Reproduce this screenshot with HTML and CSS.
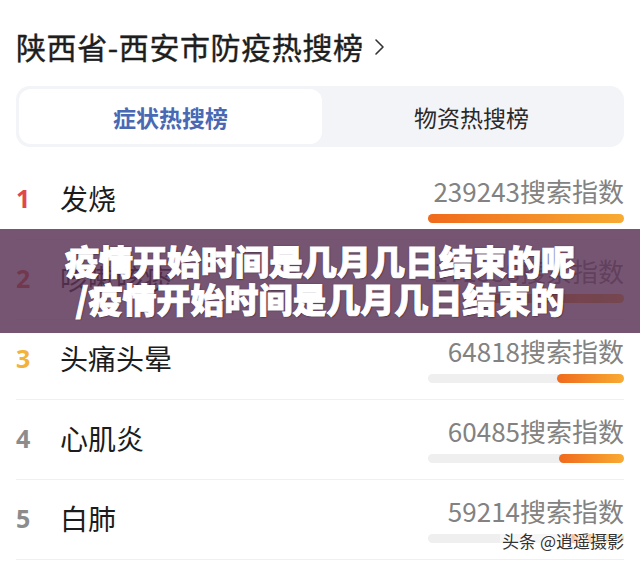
FILE: index.html
```html
<!DOCTYPE html>
<html lang="zh-CN">
<head>
<meta charset="utf-8">
<title>陕西省-西安市防疫热搜榜</title>
<link rel="stylesheet" href="styles.css">
</head>
<body>
<div class="page">
  <h1 class="title">陕西省-西安市防疫热搜榜<svg class="chev" width="12" height="20" viewBox="0 0 12 20"><polyline points="2,3 9,10 2,17" fill="none" stroke="#333" stroke-width="1.6" stroke-linecap="round" stroke-linejoin="round"/></svg></h1>

  <div class="tabs">
    <div class="tab active">症状热搜榜</div>
    <div class="tab">物资热搜榜</div>
  </div>

  <ul class="list">
    <li class="row">
      <div class="left"><span class="rank r1">1</span><span class="label">发烧</span></div>
      <div class="right"><div class="index">239243搜索指数</div><div class="track"><div class="fill" style="width:100%"></div></div></div>
    </li>
    <li class="row">
      <div class="left"><span class="rank r2">2</span><span class="label">咳嗽咳痰</span></div>
      <div class="right"><div class="index">171538搜索指数</div><div class="track"><div class="fill" style="width:82%"></div></div></div>
    </li>
    <li class="row">
      <div class="left"><span class="rank r3">3</span><span class="label">头痛头晕</span></div>
      <div class="right"><div class="index">64818搜索指数</div><div class="track"><div class="fill" style="width:34%"></div></div></div>
    </li>
    <li class="row">
      <div class="left"><span class="rank">4</span><span class="label">心肌炎</span></div>
      <div class="right"><div class="index">60485搜索指数</div><div class="track"><div class="fill" style="width:33%"></div></div></div>
    </li>
    <li class="row">
      <div class="left"><span class="rank">5</span><span class="label">白肺</span></div>
      <div class="right"><div class="index">59214搜索指数</div><div class="track"><div class="fill" style="width:32%"></div></div></div>
    </li>
  </ul>

  <div class="banner">
    <span class="banner-line">疫情开始时间是几月几日结束的呢</span>
    <span class="banner-line">/疫情开始时间是几月几日结束的</span>
  </div>

  <div class="watermark">头条 @逍遥摄影</div>
</div>
</body>
</html>
```

FILE: styles.css
```css
* { box-sizing: border-box; }

html, body {
  margin: 0;
  padding: 0;
  background: #ffffff;
}

body {
  font-family: "Noto Sans CJK SC", "Noto Sans", sans-serif;
  color: #1f1f1f;
}

.page {
  position: relative;
  width: 640px;
  height: 565px;
  overflow: hidden;
  padding: 0 16px;
}

.title {
  margin: 26px 0 0 0;
  font-family: "Noto Sans CJK SC", sans-serif;
  font-size: 30px;
  line-height: 40px;
  font-weight: 400;
  color: #1e1e1e;
  letter-spacing: 0.6px;
  -webkit-text-stroke: 0.4px #1e1e1e;
  display: flex;
  align-items: center;
}

.chev {
  margin-left: 10px;
  margin-top: 2px;
}

.tabs {
  margin-top: 20px;
  height: 61px;
  background: #f3f4f7;
  border-radius: 14px;
  padding: 3px;
  display: flex;
}

.tab {
  flex: 1;
  display: flex;
  align-items: center;
  justify-content: center;
  font-size: 23px;
  color: #2a2a2a;
  border-radius: 12px;
}

.tab.active {
  background: #ffffff;
  color: #4a69b4;
  font-weight: 700;
  flex: 0 0 303px;
}

.list {
  list-style: none;
  margin: 13px 0 0 0;
  padding: 0;
}

.row {
  height: 80px;
  border-bottom: 1px solid #f0f0f0;
  display: flex;
  justify-content: space-between;
}

.left {
  display: flex;
  align-items: center;
  padding-bottom: 3px;
}

.rank {
  width: 44px;
  font-family: "Noto Sans", "DejaVu Sans", sans-serif;
  font-size: 25px;
  font-weight: 700;
  color: #8c8c8c;
}

.rank.r1 { color: #e0474c; }
.rank.r2 { color: #e8582e; }
.rank.r3 { color: #f3b33a; }

.label {
  font-size: 28px;
  color: #1c1c1c;
}

.right {
  width: 196px;
  padding-top: 16px;
  display: flex;
  flex-direction: column;
  align-items: flex-end;
  gap: 8px;
}

.index {
  font-size: 26px;
  line-height: 30px;
  color: #828282;
  white-space: nowrap;
}

.track {
  width: 196px;
  height: 9px;
  border-radius: 5px;
  background: #efefef;
  display: flex;
  justify-content: flex-end;
}

.fill {
  height: 9px;
  border-radius: 5px;
  background: linear-gradient(90deg, #f06a1c, #f8ab32);
}

.banner {
  position: absolute;
  left: 0;
  right: 0;
  top: 229px;
  height: 104px;
  background: rgba(90, 50, 86, 0.83);
  display: flex;
  flex-direction: column;
  align-items: center;
  justify-content: center;
  padding-bottom: 2px;
}

.banner-line {
  display: block;
  font-size: 34px;
  line-height: 38px;
  font-weight: 900;
  color: #ffffff;
  -webkit-text-stroke: 1px #ffffff;
  text-shadow: 0 0 2px rgba(40, 20, 40, 0.7), 1px 1px 1px rgba(40, 20, 40, 0.5);
}

.watermark {
  position: absolute;
  right: 14px;
  top: 530px;
  font-size: 17px;
  line-height: 22px;
  color: #333333;
  text-shadow: 0 0 2px #fff, 0 0 2px #fff, 0 0 3px #fff, 0 0 3px #fff;
  background: rgba(255, 255, 255, 0.45);
  padding: 0 2px;
}
```
